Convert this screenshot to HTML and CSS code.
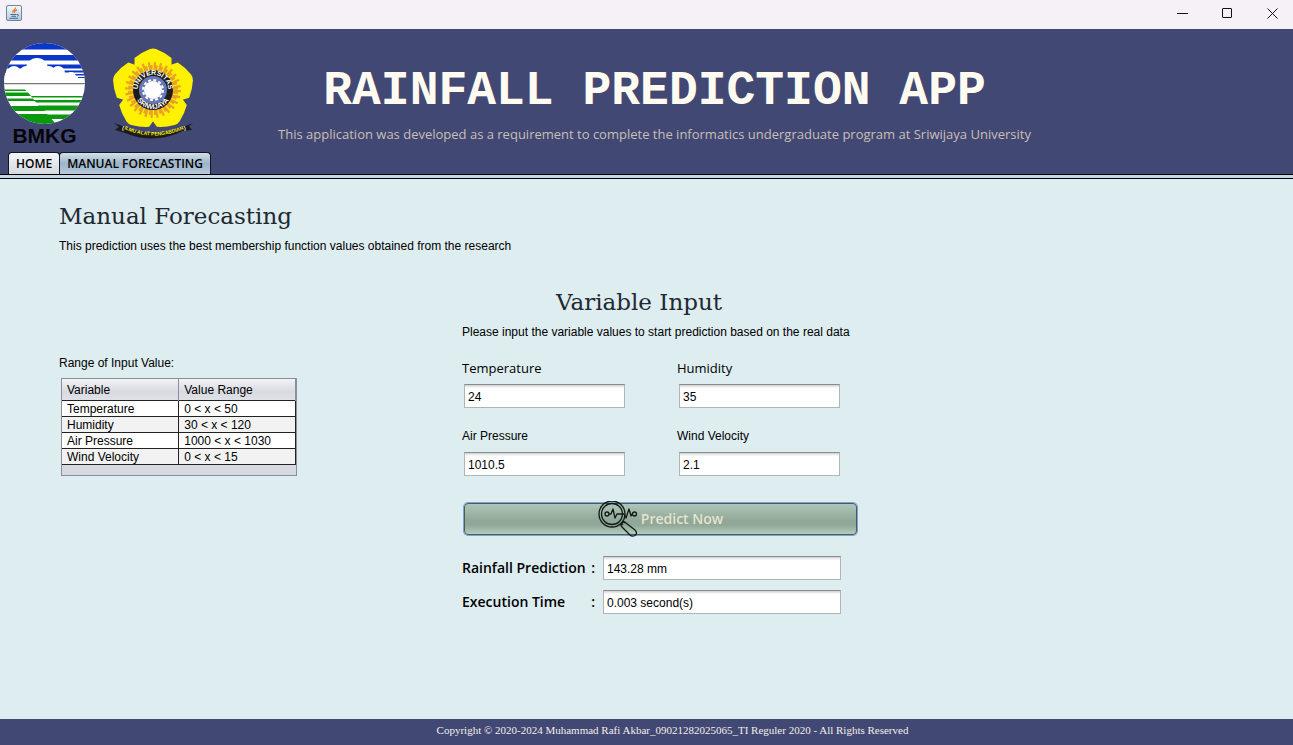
FILE: index.html
```html
<!DOCTYPE html>
<html lang="en">
<head>
<meta charset="utf-8">
<meta name="viewport" content="width=device-width, initial-scale=1">
<title>Rainfall Prediction App</title>
<link rel="stylesheet" href="styles.css">
</head>
<body>
<div class="window-bar">
  <svg class="java-icon" viewBox="0 0 16 16" aria-hidden="true">
    <defs><linearGradient id="tile" x1="0" y1="0" x2="0" y2="1"><stop offset="0" stop-color="#f8fafb"/><stop offset="1" stop-color="#b7c8d8"/></linearGradient></defs>
    <rect x=".5" y=".5" width="15" height="15" rx="1.5" fill="url(#tile)" stroke="#6687a3"/>
    <path d="M9.500 2.500C10 4.500 6 5 7 7.500M11 5C9 5.500 8 6.500 8.500 8" fill="none" stroke="#e8792b" stroke-width="1.300"/>
    <path d="M4.500 9.500H10.500M5.500 11.300H10M3.500 13.300H12M11 9.500C13 9 13 11 11 11.300" fill="none" stroke="#386f9f"/>
  </svg>
  <div class="window-buttons">
    <button type="button" aria-label="Minimize"><svg viewBox="0 0 11 11"><path d="M0 5.500H11"/></svg></button>
    <button type="button" aria-label="Maximize"><svg viewBox="0 0 11 11"><rect x=".5" y=".5" width="9" height="9" rx=".5"/></svg></button>
    <button type="button" aria-label="Close"><svg viewBox="0 0 11 11"><path d="M.5 .5L10.500 10.500M10.500 .5L.5 10.500"/></svg></button>
  </div>
</div>

<header class="banner">
  <div class="logos">
    <svg class="logo-bmkg" viewBox="0 0 82 108" role="img" aria-label="BMKG">
      <defs><clipPath id="globe"><circle cx="40.500" cy="40.500" r="40.500"/></clipPath></defs>
      <g clip-path="url(#globe)">
        <rect width="82" height="82" fill="#fff"/>
        <path fill="#0a37c8" d="M0 0H82V6.500H0ZM0 12H82V17.500H0ZM0 21.500H82V25.500H0ZM60 27.500H82V29.500H60ZM70 31H82V32.500H70ZM74 34H82V35H74Z"/>
        <g fill="#fff"><circle cx="10" cy="30" r="7"/><circle cx="33" cy="26" r="11"/><circle cx="22" cy="29" r="6"/><circle cx="45" cy="29" r="6"/><circle cx="54" cy="30" r="7"/><circle cx="67" cy="34" r="5"/><rect y="30" width="71" height="8"/></g>
        <path stroke="#777" stroke-width="1.300" d="M0 40.700H82"/>
        <path fill="#0a990e" d="M0 46.500H21L22.500 48H0ZM0 49.500H24L27 53H0ZM0 55.500H29L31 58H0ZM0 63H36L41 68H0ZM0 71H43L52 81H0ZM27 53H82V54.500H28ZM30 57H82V59.500H32ZM34 62.500H82V67.500H39ZM42 71.500H82V76H47Z"/>
      </g>
      <text x="40.500" y="100" text-anchor="middle" class="bmkg-name">BMKG</text>
    </svg>
    <svg class="logo-unsri" viewBox="0 0 82 92" role="img" aria-label="Universitas Sriwijaya">
      <defs>
        <path id="petal" d="M0 0L-18.500-25L-18.500-32Q-12-37.500-3-41Q0-42 3-41Q12-37.500 18.500-32L18.500-25Z"/>
        <path id="arc-top" d="M-14.500 5A15.300 15.300 0 1 1 14.500 5"/>
        <path id="arc-low" d="M-18.500 3A18.700 18.700 0 0 0 18.500 3"/>
        <path id="arc-motto" d="M9 80Q41 95 73 80"/>
      </defs>
      <g transform="translate(40 42)">
        <g fill="#fff200"><use href="#petal"/><use href="#petal" transform="rotate(72)"/><use href="#petal" transform="rotate(144)"/><use href="#petal" transform="rotate(216)"/><use href="#petal" transform="rotate(288)"/></g>
        <g fill="none" stroke="#e9a227"><circle r="22" stroke-width="6" stroke-dasharray="3.800 1.138"/><circle r="26" stroke-width="4" stroke-dasharray="2.200 3.634"/></g>
        <circle r="20" fill="#1c1a1c"/>
        <circle r="14" fill="#6878b5"/>
        <circle r="9" fill="#fff"/>
        <circle r="10" fill="none" stroke="#fff" stroke-width="2" stroke-dasharray="3 2.236"/>
        <text class="seal-text"><textPath href="#arc-top" startOffset="50%" text-anchor="middle">UNIVERSITAS</textPath></text>
        <text class="seal-text"><textPath href="#arc-low" startOffset="50%" text-anchor="middle">SRIWIJAYA</textPath></text>
      </g>
      <path fill="#1c1a1c" d="M1 75L12 79Q41 91 70 79L80 75L76 78L79 82L70 83Q41 97 12 85L2 82L6 79Z"/>
      <path stroke="#ddd" fill="none" d="M11 78Q9 80 10 83M71 78Q73 80 72 83"/>
      <text class="motto"><textPath href="#arc-motto" startOffset="50%" text-anchor="middle">ILMU ALAT PENGABDIAN</textPath></text>
    </svg>
  </div>
  <div class="banner-text">
    <h1>RAINFALL PREDICTION APP</h1>
    <p>This application was developed as a requirement to complete the informatics undergraduate program at Sriwijaya University</p>
  </div>
</header>

<nav class="tabs" role="tablist">
  <button type="button" role="tab" class="tab" aria-selected="false">HOME</button>
  <button type="button" role="tab" class="tab tab-active" aria-selected="true">MANUAL FORECASTING</button>
</nav>

<main class="content">
  <section class="intro">
    <h2>Manual Forecasting</h2>
    <p>This prediction uses the best membership function values obtained from the research</p>
  </section>
  <div class="columns">
    <section class="ranges">
      <p id="range-title">Range of Input Value:</p>
      <div class="table-frame">
        <table aria-labelledby="range-title">
          <thead><tr><th>Variable</th><th>Value Range</th></tr></thead>
          <tbody>
            <tr><td>Temperature</td><td>0 &lt; x &lt; 50</td></tr>
            <tr><td>Humidity</td><td>30 &lt; x &lt; 120</td></tr>
            <tr><td>Air Pressure</td><td>1000 &lt; x &lt; 1030</td></tr>
            <tr><td>Wind Velocity</td><td>0 &lt; x &lt; 15</td></tr>
          </tbody>
        </table>
      </div>
    </section>
    <form class="predict">
      <h2>Variable Input</h2>
      <p>Please input the variable values to start prediction based on the real data</p>
      <div class="fields">
        <div class="field"><label class="label-ui" for="temperature">Temperature</label><input id="temperature" type="text" value="24"></div>
        <div class="field"><label class="label-ui" for="humidity">Humidity</label><input id="humidity" type="text" value="35"></div>
        <div class="field"><label for="pressure">Air Pressure</label><input id="pressure" type="text" value="1010.5"></div>
        <div class="field"><label for="wind">Wind Velocity</label><input id="wind" type="text" value="2.1"></div>
      </div>
      <button type="button" class="predict-button">
        <svg viewBox="0 0 40 36" aria-hidden="true">
          <g fill="none" stroke="#111b16" stroke-width="1.300" stroke-linejoin="round">
            <circle cx="14" cy="13" r="13"/><circle cx="14" cy="13" r="10.500"/>
            <circle cx="9" cy="13" r="2"/><circle cx="36.500" cy="13" r="2"/>
            <path d="M11 13H13L15 8L17 17L19 13H26L28 17L31 8L33 15L34 13H34.500M23 22L25 24M25 20L27 22"/>
            <path d="M24 26Q22 24 24 22Q26 20 28 22L37 29Q40 32 37 34.500Q34 36 32 34Z"/>
          </g>
        </svg>
        <span>Predict Now</span>
      </button>
      <div class="results">
        <label for="rain"><span>Rainfall Prediction</span><span>:</span></label><input id="rain" type="text" value="143.28 mm" readonly>
        <label for="time"><span>Execution Time</span><span>:</span></label><input id="time" type="text" value="0.003 second(s)" readonly>
      </div>
    </form>
  </div>
</main>

<footer class="footer">Copyright © 2020-2024 Muhammad Rafi Akbar_09021282025065_TI Reguler 2020 - All Rights Reserved</footer>
</body>
</html>
```
FILE: styles.css
```css
* { box-sizing: border-box; }

body {
  margin: 0;
  min-height: 100vh;
  display: flex;
  flex-direction: column;
  background: #ddedf0;
  color: #000;
  font: 12px/16px "Liberation Sans", Arial, sans-serif;
}

h1, h2, p { margin: 0; }
button, input { font: inherit; color: inherit; }

.window-bar {
  display: flex;
  justify-content: space-between;
  align-items: center;
  height: 29px;
  padding: 0 0 3px 6px;
  background: #f6f0f7;
}
.java-icon { width: 16px; height: 16px; }
.window-buttons { display: flex; }
.window-buttons button {
  display: grid;
  place-items: center;
  width: 45px;
  height: 26px;
  padding: 0 0 0 4px;
  border: 0;
  background: none;
}
.window-buttons svg { width: 11px; height: 11px; fill: none; stroke: #111; }

.banner {
  display: grid;
  grid-template-columns: 197px 1fr 181px;
  height: 123px;
  background: #424874;
}
.logos { display: flex; gap: 27px; padding: 14px 0 0 4px; align-items: flex-start; }
.logo-bmkg { width: 82px; height: 108px; flex: none; }
.logo-unsri { width: 82px; height: 92px; flex: none; margin-top: 5px; }
.bmkg-name { font: bold 21px "Liberation Sans", Arial, sans-serif; fill: #06060a; }
.seal-text { font: bold 7px "Liberation Sans", Arial, sans-serif; fill: #fff; }
.motto { font: bold 5px "Liberation Sans", Arial, sans-serif; fill: #fff200; }

.banner-text { padding-top: 35px; text-align: center; white-space: nowrap; }
.banner-text h1 {
  color: #fffbf0;
  font: bold 48px/54px "Courier New", "Liberation Mono", monospace;
}
.banner-text p {
  margin-top: 6px;
  color: #c9bfb5;
  font: 13px/20px "Segoe UI", "Open Sans", sans-serif;
}

.tabs {
  display: flex;
  align-items: flex-end;
  padding-left: 8px;
  height: 22px;
  background: #424874;
}
.tab {
  height: 22px;
  padding: 0 7px;
  border: 1px solid #15171f;
  border-bottom: 0;
  border-radius: 4px 4px 0 0;
  background: linear-gradient(#f4f5f7, #d6d9df);
  font: 600 12px/20px "Segoe UI", "Open Sans", sans-serif;
}
.tab-active { margin-left: -1px; background: linear-gradient(#d3e0e9, #9db4c8 50%, #b5cbdc); }

.content {
  flex: 1;
  padding: 25px 59px 0;
  border-top: 1px solid #000;
  background: linear-gradient(#c3d8e6 3px, #000 3px, #000 4px, #ddedf0 4px);
}
h2 {
  color: #222831;
  font: 23px/32px "NSimSun", "DejaVu Serif", serif;
}
.intro p { margin-top: 6px; }

.columns { display: grid; grid-template-columns: 403px 396px; margin-top: 32px; align-items: start; }
.ranges { width: 238px; padding-top: 69px; }
.table-frame {
  margin: 7px 0 0 2px;
  padding-bottom: 10px;
  border: 1px solid #8c8f99;
  background: #d6d9e0;
}
table { width: 100%; border-collapse: collapse; table-layout: fixed; }
th, td { height: 16px; padding: 1px 5px 0; line-height: 14px; text-align: left; font-weight: normal; }
th { height: 21px; border-right: 1px solid #8c8f99; background: linear-gradient(#f2f3f6, #d8dae1 60%, #dfe1e7); }
td { border: 1px solid #222; border-left: 0; background: #fff; }
tr:nth-child(even) td { background: #f2f2f2; }

.predict h2 { padding-right: 42px; text-align: center; }
.predict > p { margin-top: 6px; }
.fields { display: grid; grid-template-columns: repeat(2, 163px); gap: 20px 52px; margin-top: 20px; }
.field { display: grid; gap: 8px; }
.field label { line-height: 16px; }
.field .label-ui { font: 13px/16px "Segoe UI", "Open Sans", sans-serif; }
.field input { margin-left: 2px; width: 161px; }
input {
  height: 24px;
  padding: 2px 3px 0;
  border: 1px solid #b2b5b8;
  border-top-color: #8a8d90;
  background: linear-gradient(#d0d0d0, #fff 3px);
}
.predict-button {
  display: flex;
  justify-content: center;
  align-items: center;
  gap: 3px;
  width: 393px;
  height: 32px;
  margin: 27px 0 0 2px;
  padding: 0;
  border: 1px solid #4d5a5a;
  border-radius: 4px;
  box-shadow: 0 0 0 1px #77a5d6;
  background: linear-gradient(#afc5b7, #91a798 55%, #91a798 70%, #b3ccbc);
  color: #e4e3ce;
  font: 600 14px/18px "Segoe UI", "Open Sans", sans-serif;
}
.predict-button svg { width: 40px; height: 36px; }
.results { display: grid; grid-template-columns: 141px 238px; gap: 10px 0; margin-top: 21px; }
.results label {
  display: flex;
  justify-content: space-between;
  padding-right: 8px;
  font: 600 14px/24px "Segoe UI", "Open Sans", sans-serif;
}

.footer {
  height: 26px;
  padding-left: 52px;
  background: #424874;
  color: #f4eee8;
  font: 11px/23px "Liberation Serif", serif;
  text-align: center;
}
```
